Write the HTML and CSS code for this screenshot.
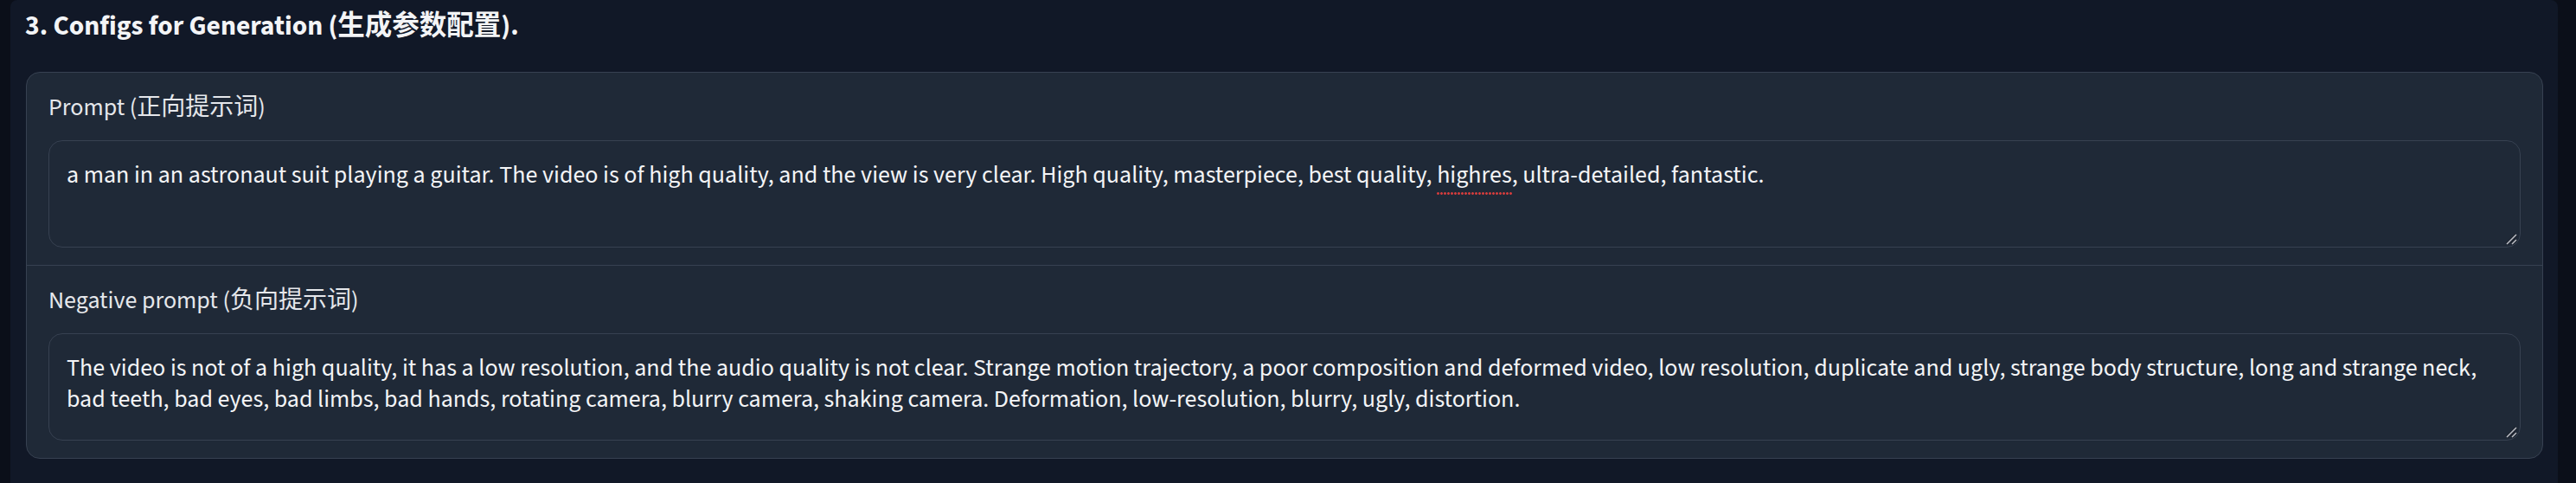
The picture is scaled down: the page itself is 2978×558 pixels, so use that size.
FILE: index.html
```html
<!DOCTYPE html>
<html lang="en">
<head>
<meta charset="utf-8">
<title>Configs for Generation</title>
<link rel="stylesheet" href="styles.css">
</head>
<body>
<main class="panel">
  <h3 class="heading">3. Configs for Generation (生成参数配置).</h3>
  <section class="card">
    <div class="block">
      <label class="label">Prompt (正向提示词)</label>
      <div class="textbox" role="textbox" aria-multiline="true">a man in an astronaut suit playing a guitar. The video is of high quality, and the view is very clear. High quality, masterpiece, best quality, <span class="misspelled">highres</span>, ultra-detailed, fantastic.<svg class="resize" viewBox="0 0 14 14" width="14" height="14" aria-hidden="true"><path d="M13 2 L2 13" stroke="#1a1f29" stroke-width="3.2"/><path d="M13 2 L2 13" stroke="#b8bcc4" stroke-width="1.6"/><path d="M13 8 L8 13" stroke="#1a1f29" stroke-width="3.2"/><path d="M13 8 L8 13" stroke="#b8bcc4" stroke-width="1.6"/></svg></div>
    </div>
    <div class="block block-sep">
      <label class="label">Negative prompt (负向提示词)</label>
      <div class="textbox" role="textbox" aria-multiline="true">The video is not of a high quality, it has a low resolution, and the audio quality is not clear. Strange motion trajectory, a poor composition and deformed video, low resolution, duplicate and ugly, strange body structure, long and strange neck, bad teeth, bad eyes, bad limbs, bad hands, rotating camera, blurry camera, shaking camera. Deformation, low-resolution, blurry, ugly, distortion.<svg class="resize" viewBox="0 0 14 14" width="14" height="14" aria-hidden="true"><path d="M13 2 L2 13" stroke="#1a1f29" stroke-width="3.2"/><path d="M13 2 L2 13" stroke="#b8bcc4" stroke-width="1.6"/><path d="M13 8 L8 13" stroke="#1a1f29" stroke-width="3.2"/><path d="M13 8 L8 13" stroke="#b8bcc4" stroke-width="1.6"/></svg></div>
    </div>
  </section>
</main>
</body>
</html>
```
FILE: styles.css
```css
html, body {
  margin: 0;
  padding: 0;
  height: 100%;
}
body {
  background: #0b0f19;
  font-family: "Source Sans Pro", "Source Sans 3", "Noto Sans CJK SC", sans-serif;
  color: #e5e7eb;
  overflow: hidden;
}
.panel {
  box-sizing: border-box;
  margin: 0 21px 0 12px;
  height: 558px;
  background: #111827;
  border-radius: 8px 8px 0 0;
  padding: 8px 17px 0 18px;
}
.heading {
  margin: 0 0 30px -1px;
  font-size: 31.5px;
  font-weight: 700;
  line-height: 45px;
  color: #f3f4f6;
}
.card {
  background: #1f2937;
  border: 1px solid #374151;
  border-radius: 16px;
  overflow: hidden;
}
.block {
  display: flex;
  flex-direction: column;
  gap: 20px;
  padding: 22px 25px 20px 25px;
}
.block-sep {
  border-top: 1px solid #374151;
}
.label {
  font-size: 28px;
  line-height: 36px;
  color: #e5e7eb;
}
.textbox {
  position: relative;
  box-sizing: border-box;
  height: 124px;
  border: 1px solid #374151;
  border-radius: 16px;
  background: #1f2937;
  padding: 21px 20px;
  font-size: 28px;
  line-height: 36px;
  color: #f3f4f6;
}
.misspelled {
  background-image: radial-gradient(circle at 1.5px 1.5px, #d23c3c 1.2px, transparent 1.6px);
  background-size: 4px 3px;
  background-repeat: repeat-x;
  background-position: 0 100%;
  padding-bottom: 3px;
}
.resize {
  position: absolute;
  right: 3px;
  bottom: 2px;
}
```
